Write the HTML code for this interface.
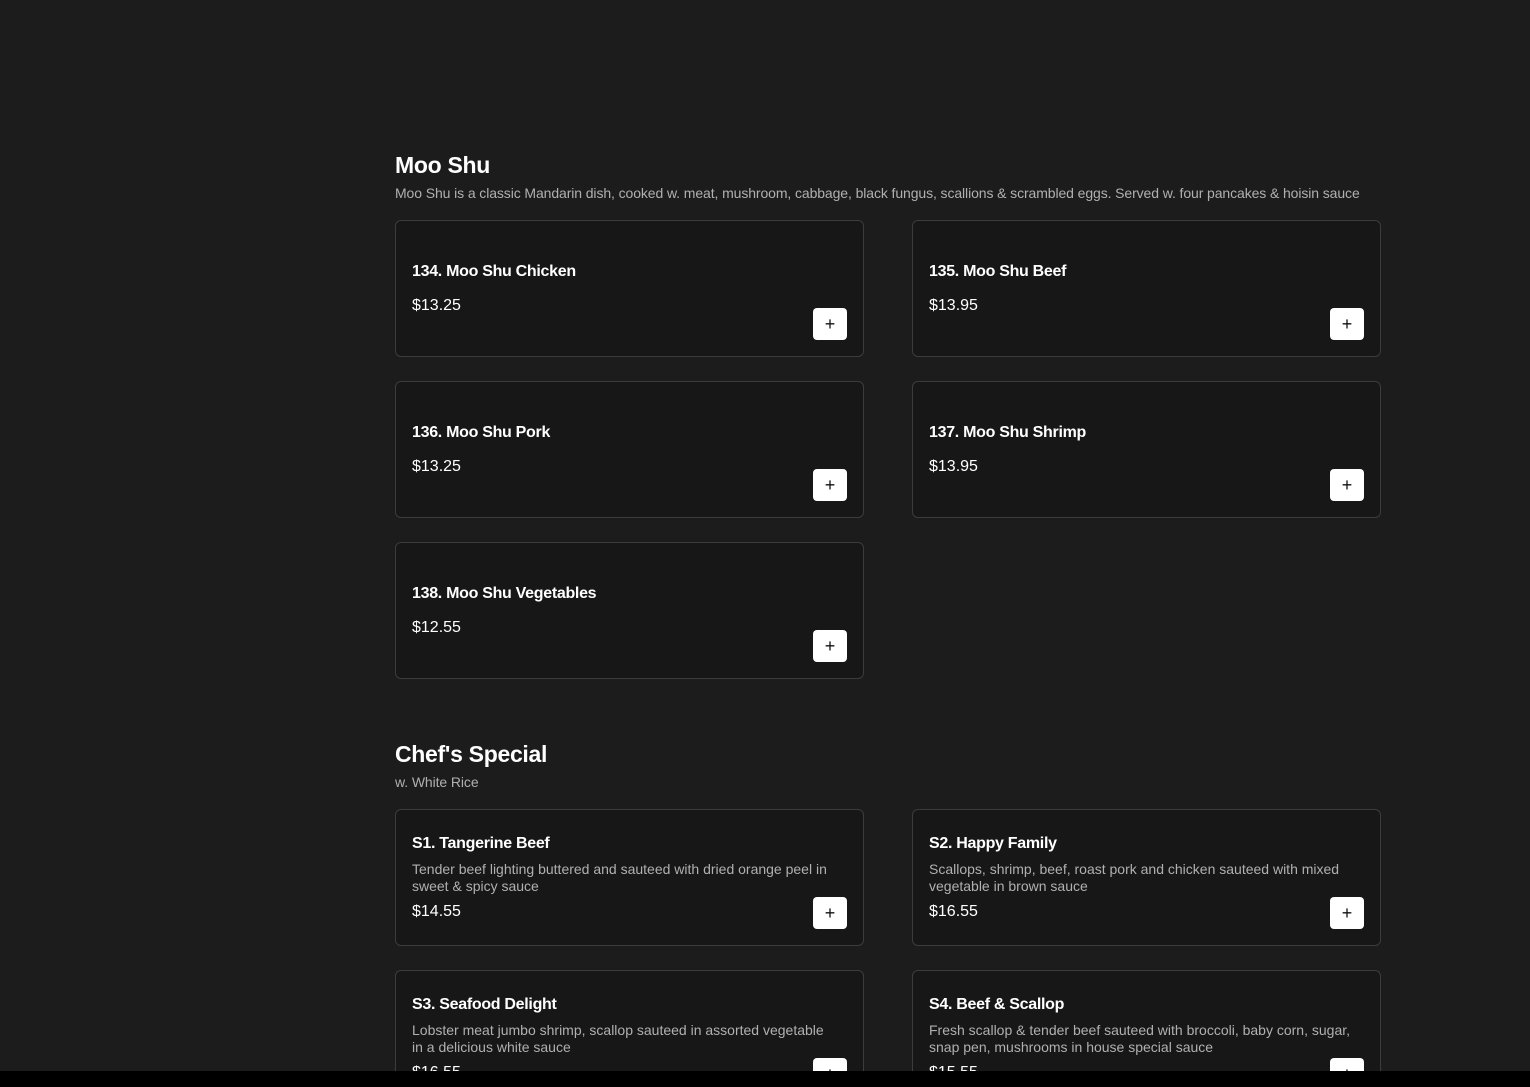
<!DOCTYPE html>
<html><head><meta charset="utf-8"><style>
*{margin:0;padding:0;box-sizing:border-box}
html,body{width:1530px;height:1087px;overflow:hidden}
body{background:#1c1c1c;font-family:"Liberation Sans",sans-serif;color:#fff;position:relative}
.h{position:absolute;left:395px;font-size:23px;font-weight:bold;letter-spacing:-0.3px}
.s{position:absolute;left:395px;font-size:14px;color:#b0b0b0;letter-spacing:-0.1px}
.c{position:absolute;width:469px;height:137px;background:#171717;border:1px solid #3c3c3c;border-radius:6px}
.t{position:absolute;left:16px;font-size:16px;font-weight:bold;letter-spacing:-0.3px}
.d{position:absolute;left:16px;width:420px;font-size:14px;line-height:17px;color:#b0b0b0}
.p{position:absolute;left:16px;font-size:16px}
.b{position:absolute;right:16px;top:87px;width:34px;height:32px;background:#fff;border-radius:4px;color:#111;font-size:18px;text-align:center;line-height:32px}
.bar{position:absolute;left:0;top:1071px;width:1530px;height:16px;background:#000;z-index:5}
</style></head><body>
<div class="h" style="top:152px">Moo Shu</div>
<div class="s" style="top:185px">Moo Shu is a classic Mandarin dish, cooked w. meat, mushroom, cabbage, black fungus, scallions &amp; scrambled eggs. Served w. four pancakes &amp; hoisin sauce</div>

<div class="c" style="left:395px;top:220px"><div class="t" style="top:42px">134. Moo Shu Chicken</div><div class="p" style="top:76px">$13.25</div><div class="b">+</div></div>
<div class="c" style="left:912px;top:220px"><div class="t" style="top:42px">135. Moo Shu Beef</div><div class="p" style="top:76px">$13.95</div><div class="b">+</div></div>
<div class="c" style="left:395px;top:381px"><div class="t" style="top:42px">136. Moo Shu Pork</div><div class="p" style="top:76px">$13.25</div><div class="b">+</div></div>
<div class="c" style="left:912px;top:381px"><div class="t" style="top:42px">137. Moo Shu Shrimp</div><div class="p" style="top:76px">$13.95</div><div class="b">+</div></div>
<div class="c" style="left:395px;top:542px"><div class="t" style="top:42px">138. Moo Shu Vegetables</div><div class="p" style="top:76px">$12.55</div><div class="b">+</div></div>

<div class="h" style="top:741px">Chef's Special</div>
<div class="s" style="top:774px">w. White Rice</div>

<div class="c" style="left:395px;top:809px"><div class="t" style="top:25px">S1. Tangerine Beef</div><div class="d" style="top:51px">Tender beef lighting buttered and sauteed with dried orange peel in sweet &amp; spicy sauce</div><div class="p" style="top:93px">$14.55</div><div class="b">+</div></div>
<div class="c" style="left:912px;top:809px"><div class="t" style="top:25px">S2. Happy Family</div><div class="d" style="top:51px">Scallops, shrimp, beef, roast pork and chicken sauteed with mixed vegetable in brown sauce</div><div class="p" style="top:93px">$16.55</div><div class="b">+</div></div>
<div class="c" style="left:395px;top:970px"><div class="t" style="top:25px">S3. Seafood Delight</div><div class="d" style="top:51px">Lobster meat jumbo shrimp, scallop sauteed in assorted vegetable in a delicious white sauce</div><div class="p" style="top:93px">$16.55</div><div class="b">+</div></div>
<div class="c" style="left:912px;top:970px"><div class="t" style="top:25px">S4. Beef &amp; Scallop</div><div class="d" style="top:51px;width:440px">Fresh scallop &amp; tender beef sauteed with broccoli, baby corn, sugar,<br>snap pen, mushrooms in house special sauce</div><div class="p" style="top:93px">$15.55</div><div class="b">+</div></div>
<div class="bar"></div>
</body></html>
